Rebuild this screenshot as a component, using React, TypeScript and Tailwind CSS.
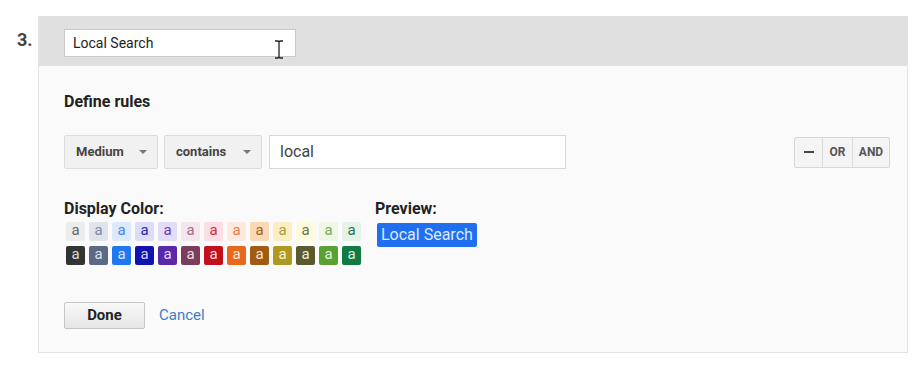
const swatchRows: { bg: string; fg: string }[][] = [
    [
        { bg: '#ececec', fg: '#666666' },
        { bg: '#dfe3ec', fg: '#7d8aa3' },
        { bg: '#dce8fc', fg: '#4a86e8' },
        { bg: '#dcdcf8', fg: '#2a2ab4' },
        { bg: '#e3dcf6', fg: '#6a3ab2' },
        { bg: '#f5e5ee', fg: '#a07088' },
        { bg: '#fcdde3', fg: '#c8303f' },
        { bg: '#fde9de', fg: '#e57a4c' },
        { bg: '#fad8b6', fg: '#a06420' },
        { bg: '#fbefc2', fg: '#a89a40' },
        { bg: '#fdfbdd', fg: '#6f6f40' },
        { bg: '#eef6e5', fg: '#78a866' },
        { bg: '#e5f2e8', fg: '#2a7050' },
    ],
    [
        { bg: '#333333', fg: '#dddddd' },
        { bg: '#5a6a85', fg: '#dde3ee' },
        { bg: '#1f78f0', fg: '#d6e6ff' },
        { bg: '#1212b0', fg: '#d0d0ff' },
        { bg: '#5a28a8', fg: '#e2d6ff' },
        { bg: '#7a3d5b', fg: '#f0dde8' },
        { bg: '#c2101c', fg: '#ffdadd' },
        { bg: '#e8681c', fg: '#ffe6d6' },
        { bg: '#a05d12', fg: '#fde6cc' },
        { bg: '#ae9a22', fg: '#fbf3cc' },
        { bg: '#595a30', fg: '#efefd5' },
        { bg: '#5ba032', fg: '#e4f5da' },
        { bg: '#107a42', fg: '#d8f2e2' },
    ],
];

const Caret = () => (
    <svg width="8" height="4" viewBox="0 0 8 4" className="ml-auto">
        <path d="M0 0 L8 0 L4 4 Z" fill="#777" />
    </svg>
);

const Dropdown = ({ label, width }: { label: string; width: string }) => (
    <div className={`${width} h-[34px] flex items-center pl-[11px] pr-[10px] bg-[#f1f1f1] border border-[#dcdcdc] rounded-[2px] text-[13px] font-bold text-[#444]`}>
        {label}
        <Caret />
    </div>
);

const App = () => {
    return (
        <div className="relative w-[924px] h-[369px] bg-white font-['Roboto','Liberation_Sans',sans-serif] text-[#333]">
            <div className="flex pt-[16px] pl-[17px]">
                <div className="w-[21px] pt-[15px] text-[18px] font-bold text-[#444] leading-none">3.</div>
                <div className="w-[870px] border border-[#e4e4e4] border-t-0">
                    {/* header with segment name */}
                    <div className="h-[50px] bg-[#e0e0e0] pl-[25px] pt-[13px]">
                        <div className="w-[232px] h-[28px] bg-white border border-[#c9c9c9] flex items-center pl-[8px] text-[14px] text-[#222]">
                            Local Search
                        </div>
                    </div>

                    <div className="bg-[#fafafb] pl-[25px] pr-[17px] pt-[28px] pb-[23px]">
                        <div className="text-[16px] font-bold text-[#222] leading-none">Define rules</div>

                        <div className="flex items-center mt-[25px]">
                            <Dropdown label="Medium" width="w-[94px]" />
                            <div className="w-[6px]" />
                            <Dropdown label="contains" width="w-[98px]" />
                            <div className="w-[7px]" />
                            <div className="w-[297px] h-[34px] bg-white border border-[#d9d9d9] flex items-center pl-[10px] text-[16px] text-[#444]">
                                local
                            </div>
                            <div className="ml-auto flex h-[31px] border border-[#d6d6d6] rounded-[2px] bg-[#f4f4f4] text-[12px] font-bold text-[#555]">
                                <div className="w-[28px] flex items-center justify-center border-r border-[#dcdcdc]">
                                    <div className="w-[10px] h-[2px] bg-[#444]" />
                                </div>
                                <div className="w-[30px] flex items-center justify-center border-r border-[#dcdcdc]">OR</div>
                                <div className="w-[36px] flex items-center justify-center">AND</div>
                            </div>
                        </div>

                        <div className="flex mt-[32px]">
                            <div className="w-[311px]">
                                <div className="text-[16px] font-bold text-[#222] leading-none">Display Color:</div>
                                <div className="mt-[5px] ml-[2px] flex flex-col gap-[5px]">
                                    {swatchRows.map((row, i) => (
                                        <div key={i} className="flex gap-[4px]">
                                            {row.map((s, j) => (
                                                <div
                                                    key={j}
                                                    className="w-[19px] h-[19px] rounded-[2px] flex items-center justify-center text-[15px] leading-none pb-[2px]"
                                                    style={{ backgroundColor: s.bg, color: s.fg }}
                                                >
                                                    a
                                                </div>
                                            ))}
                                        </div>
                                    ))}
                                </div>
                            </div>
                            <div>
                                <div className="text-[16px] font-bold text-[#222] leading-none">Preview:</div>
                                <div className="mt-[6px] ml-[2px] inline-flex items-center h-[24px] px-[4px] rounded-[2px] bg-[#1f6ff0] text-[16px] text-[#dfe9ff]">
                                    Local Search
                                </div>
                            </div>
                        </div>

                        <div className="flex items-center mt-[37px]">
                            <div className="w-[81px] h-[27px] flex items-center justify-center border border-[#c6c6c6] rounded-[2px] bg-gradient-to-b from-[#f8f8f8] to-[#e6e6e6] text-[15px] font-bold text-[#222]">
                                Done
                            </div>
                            <div className="ml-[14px] text-[15px] text-[#3f7cc4]">Cancel</div>
                        </div>
                    </div>
                </div>
            </div>

            {/* mouse I-beam cursor over the name field */}
            <svg className="absolute left-[274px] top-[40px]" width="10" height="19" viewBox="0 0 10 19">
                <path d="M1 1 H4 L5 2 L6 1 H9 M5 2 V17 M1 18 H4 L5 17 L6 18 H9" stroke="#222" strokeWidth="1.3" fill="none" />
            </svg>
        </div>
    );
};

export default App;
